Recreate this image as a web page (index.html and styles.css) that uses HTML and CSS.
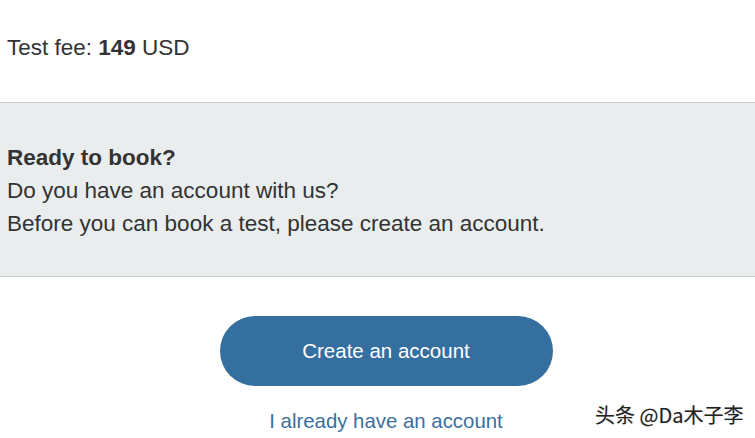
FILE: index.html
```html
<!DOCTYPE html>
<html>
<head>
<meta charset="utf-8">
<link rel="stylesheet" href="styles.css">
</head>
<body>
<div class="page">
  <p class="fee">Test fee: <strong>149</strong> USD</p>
  <section class="book">
    <p class="title">Ready to book?</p>
    <p>Do you have an account with us?</p>
    <p>Before you can book a test, please create an account.</p>
  </section>
  <div class="actions">
    <a class="btn" href="#">Create an account</a>
    <a class="link" href="#">I already have an account</a>
  </div>
  <div class="watermark">头条 @Da木子李</div>
</div>
</body>
</html>
```
FILE: styles.css
```css
html, body {
  margin: 0;
  padding: 0;
  background: #fff;
}
.page {
  position: relative;
  width: 755px;
  height: 438px;
  overflow: hidden;
  font-family: "Liberation Sans", Arial, sans-serif;
  font-size: 22.5px;
  line-height: 32px;
  color: #333;
}
p {
  margin: 0;
}
.fee {
  padding: 32px 7px 0;
  height: 70px;
}
.fee strong {
  font-weight: bold;
}
.book {
  background: #e9edee;
  border-top: 1px solid #c4cbcd;
  border-bottom: 1px solid #c4cbcd;
  padding: 38px 7px 36px;
  line-height: 33px;
}
.book .title {
  font-weight: bold;
}
.actions {
  display: flex;
  flex-direction: column;
  align-items: center;
  padding: 39px 0 0 17px;
}
.btn {
  display: flex;
  align-items: center;
  justify-content: center;
  width: 333px;
  height: 70px;
  border-radius: 35px;
  background: #346f9f;
  color: #fff;
  font-size: 20.5px;
  text-decoration: none;
}
.link {
  margin-top: 19px;
  font-size: 20.4px;
  line-height: 32px;
  color: #3d6f9d;
  text-decoration: none;
}
.watermark {
  position: absolute;
  left: 595px;
  top: 400px;
  font-family: "Noto Sans CJK SC", sans-serif;
  font-size: 20px;
  line-height: 30px;
  color: #222;
  text-shadow: 0 0 2px #fff, 0 0 1px #888;
}
```
